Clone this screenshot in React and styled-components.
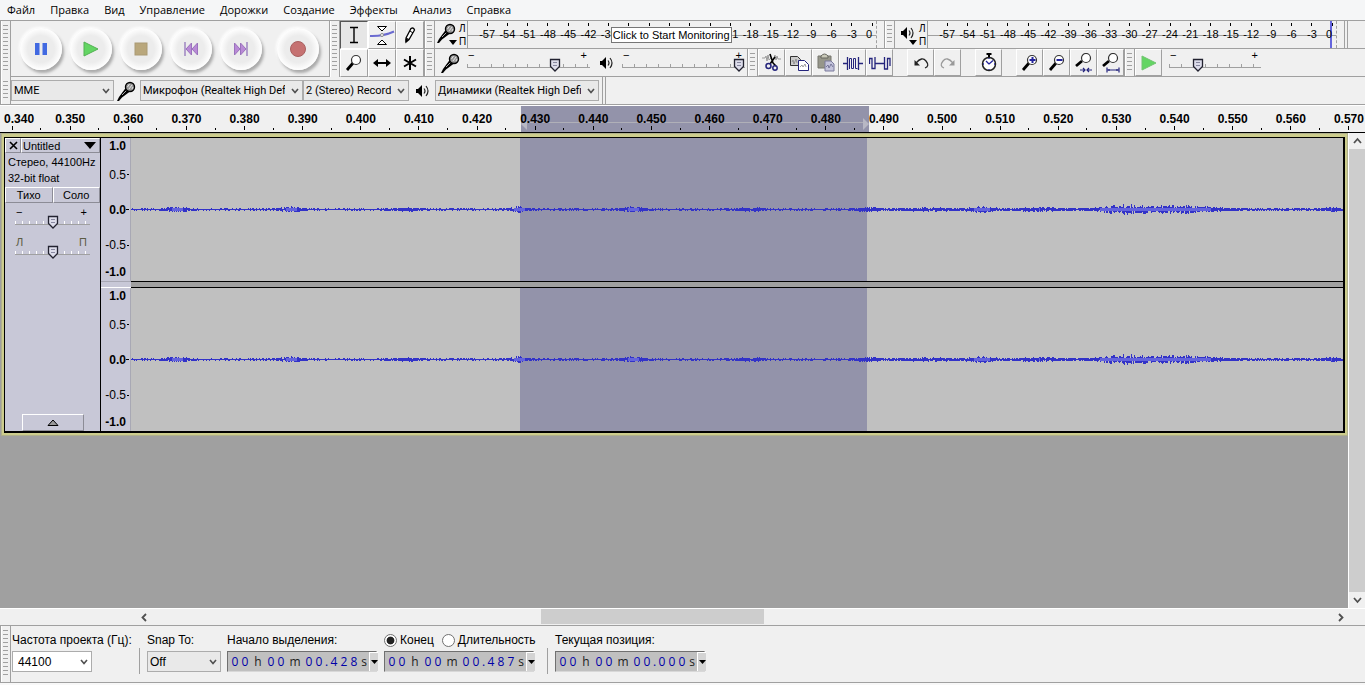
import styled, { createGlobalStyle, css } from "styled-components";

const menuItems = [
  "Файл",
  "Правка",
  "Вид",
  "Управление",
  "Дорожки",
  "Создание",
  "Эффекты",
  "Анализ",
  "Справка",
];

const meterMarks = Array.from({ length: 20 }, (_, i) => i * 3 - 57);
const timeMarks = Array.from({ length: 24 }, (_, i) =>
  (0.34 + i * 0.01).toFixed(3)
);

const App = () => {
  return (
    <Page>
      <GlobalStyle />
      <MenuBar>
        {menuItems.map((item) => (
          <MenuButton key={item}>{item}</MenuButton>
        ))}
      </MenuBar>
      <Dock>
        <TransportBar />
        <ToolsBar />
        <DockColumn>
          <DockRow>
            <Meter name="Record meter" icon={<MicIcon />} hint />
            <Meter name="Playback meter" icon={<SpeakerIcon />} peak />
            <EndMark />
          </DockRow>
          <DockRow>
            <MixerBar />
            <EditBar />
            <PlaySpeedBar />
          </DockRow>
        </DockColumn>
      </Dock>
      <DeviceBar />
      <TimeRuler />
      <Workspace>
        <TrackArea>
          <Track>
            <TrackPanel />
            <Channels>
              <Channel />
              <Channel />
            </Channels>
          </Track>
        </TrackArea>
        <VerticalScroll />
      </Workspace>
      <HorizontalScroll />
      <SelectionBar />
      <StatusBar />
    </Page>
  );
};

export default App;

const TransportBar = () => (
  <Bar>
    <Grip />
    <TransportButtons>
      <RoundButton aria-label="Pause">
        <svg width="14" height="14">
          <path d="M1 1h4.500v12h-4.500zM8.500 1h4.500v12h-4.500z" fill="#4169e1" />
        </svg>
      </RoundButton>
      <RoundButton aria-label="Play">
        <svg width="16" height="16">
          <path d="M1 1L15 8L1 15z" fill="#63d563" stroke="#52b152" />
        </svg>
      </RoundButton>
      <RoundButton aria-label="Stop">
        <svg width="14" height="14">
          <rect x="1" y="1" width="12" height="12" fill="#b9a77c" stroke="#aa9a74" />
        </svg>
      </RoundButton>
      <RoundButton aria-label="Skip to start">
        <SkipIcon />
      </RoundButton>
      <RoundButton aria-label="Skip to end">
        <SkipIcon flip />
      </RoundButton>
      <RoundButton aria-label="Record" $apart>
        <svg width="18" height="18">
          <circle cx="9" cy="9" r="7.500" fill="#c67272" stroke="#a96060" />
        </svg>
      </RoundButton>
    </TransportButtons>
  </Bar>
);

const ToolsBar = () => (
  <Bar>
    <Grip />
    <ToolGrid>
      <ToolButton aria-label="Selection tool" $pressed>
        <svg width="20" height="20">
          <path d="M6 2.500h3.500l.5.500.500-.500H14M10 3v14M6 17.500h3.500l.5-.500.500.500H14" fill="none" stroke="#000" strokeWidth="1.400" />
        </svg>
      </ToolButton>
      <ToolButton aria-label="Envelope tool">
        <svg width="26" height="22">
          <path d="M1 12Q14 12.500 25 7.500" fill="none" stroke="#6b6bd0" strokeWidth="2" />
          <path d="M8.500 2.500h9L13 7z M8.500 20.500h9L13 16z" fill="#fff" stroke="#000" />
          <circle cx="13" cy="11" r="1.500" fill="#fff" stroke="#888" />
        </svg>
      </ToolButton>
      <ToolButton aria-label="Draw tool">
        <svg width="20" height="20">
          <path d="M6 13L11 3.500Q13.500 2 14.500 5L9 14.500L6 17z" fill="#fff" stroke="#000" strokeWidth="1.300" />
          <path d="M10 6l3 2M6 13l3 1.500M6 14v3l2-2z" fill="#000" stroke="#000" />
        </svg>
      </ToolButton>
      <ToolButton aria-label="Zoom tool">
        <MagnifierIcon />
      </ToolButton>
      <ToolButton aria-label="Time shift tool">
        <svg width="20" height="20">
          <path d="M3 10h14" stroke="#000" strokeWidth="2" />
          <path d="M1 10l5-4v8zM19 10l-5-4v8z" />
        </svg>
      </ToolButton>
      <ToolButton aria-label="Multi tool">
        <svg width="20" height="20">
          <path d="M10 3v14M4 6.500l12 7M16 6.500l-12 7" stroke="#000" strokeWidth="2" />
        </svg>
      </ToolButton>
    </ToolGrid>
  </Bar>
);

// the hint lies over the middle marks, which keep only their ticks
const isCovered = (mark) => mark > -38 && mark < -22;

const Meter = ({ name, icon, hint, peak }) => (
  <MeterBar $wide={hint}>
    <Grip />
    <MeterButton aria-label={name}>
      {icon}
      <MeterArrow viewBox="0 0 8 5">
        <path d="M0 0h8L4 5z" />
      </MeterArrow>
    </MeterButton>
    <ChannelNames>
      <span>Л</span>
      <span>П</span>
    </ChannelNames>
    <MeterScale $peak={peak}>
      {meterMarks.map((mark) => (
        <MeterMark key={mark}>{hint && isCovered(mark) ? "" : mark}</MeterMark>
      ))}
      {hint && <Hint role="tooltip">Click to Start Monitoring</Hint>}
    </MeterScale>
  </MeterBar>
);

const MixerBar = () => (
  <MixerGroup>
    <Grip />
    <MixerIcon>
      <MicIcon />
    </MixerIcon>
    <LevelSlider label="Recording volume" value={74} />
    <MixerIcon>
      <SpeakerIcon />
    </MixerIcon>
    <LevelSlider label="Playback volume" value={100} />
  </MixerGroup>
);

const LevelSlider = ({ label, value, width }) => (
  <SliderBox $width={width}>
    <SliderEnds>
      <span>−</span>
      <span>+</span>
    </SliderEnds>
    <Range type="range" aria-label={label} defaultValue={value} />
  </SliderBox>
);

const EditBar = () => (
  <Bar>
    <Grip />
    <ToolButton aria-label="Cut">
      <svg width="20" height="20">
        <path d="M0 5h3l1-2 1 5 1-6 1 5 2-2M12 5l1-3 1 5 1-4 1 3h3" fill="none" stroke="#999" />
        <path d="M8 1l3 9M13 4L8 11M11 10l3 3" fill="none" stroke="#000" strokeWidth="1.600" />
        <circle cx="6.500" cy="13" r="2.500" fill="none" stroke="#24247c" strokeWidth="1.500" />
        <circle cx="13" cy="15" r="2.200" fill="none" stroke="#24247c" strokeWidth="1.500" />
      </svg>
    </ToolButton>
    <ToolButton aria-label="Copy">
      <svg width="20" height="18">
        <path d="M1.500 2.500h7l3 3v6h-10z" fill="#ccc" stroke="#333" />
        <path d="M9.500 6.500h6l4 4v6h-10z" fill="#fff" stroke="#24247c" />
        <path d="M3 8l1-2 1 4 2-5 1 4M11 13l2-2 1 2 2-3 1 3" fill="none" stroke="#888" strokeWidth=".8" />
      </svg>
    </ToolButton>
    <ToolButton aria-label="Paste">
      <svg width="18" height="20">
        <path d="M1 3h13v12H1z" fill="#96968a" stroke="#77776f" />
        <path d="M4 5V3q3.500-4 7 0v2z" fill="#c8c8b8" stroke="#66665e" />
        <path d="M8 8h6l3 3v7H8z" fill="#c4c4dc" stroke="#7a7a9c" />
        <path d="M9 14l2-2 1 3 2-4 2 3" fill="none" stroke="#77779a" />
      </svg>
    </ToolButton>
    <ToolButton aria-label="Trim">
      <svg width="20" height="18">
        <path d="M0 9.500h5M15 9.500h5M4.500 3v13M15.500 3v13" stroke="#24247c" strokeWidth="1.300" />
        <path d="M6.500 15V4.500h2V14.500h2V4.500h2V14.500h2" fill="none" stroke="#24247c" />
      </svg>
    </ToolButton>
    <ToolButton aria-label="Silence">
      <svg width="22" height="18">
        <path d="M.5 10V4.500h2.500V14.500h3V3M6 9.500h9M15.500 3v12h3V4.500h2.500V12" fill="none" stroke="#24247c" strokeWidth="1.300" />
      </svg>
    </ToolButton>
    <ToolGap />
    <ToolButton aria-label="Undo">
      <UndoIcon />
    </ToolButton>
    <ToolButton aria-label="Redo" disabled>
      <UndoIcon flip />
    </ToolButton>
    <ToolGap />
    <ToolButton aria-label="Sync-lock tracks">
      <svg width="18" height="20">
        <path d="M6.500 1h5M9 1v3" stroke="#000" strokeWidth="2" />
        <circle cx="9" cy="11" r="6.500" fill="#fff" stroke="#222" strokeWidth="1.500" />
        <path d="M9 11L6 8M9 11l4-3.500M9 5v1M9 16v1M3 11h1M14 11h1" stroke="#24249c" strokeWidth="1.300" />
      </svg>
    </ToolButton>
    <ToolGap />
    <ToolButton aria-label="Zoom in">
      <MagnifierIcon sign="M9.500 6h6M12.500 3v6" />
    </ToolButton>
    <ToolButton aria-label="Zoom out">
      <MagnifierIcon sign="M9.500 6h6" />
    </ToolButton>
    <ToolButton aria-label="Fit selection">
      <MagnifierIcon under="M6 17h5M13 17h5M9 15l2 2-2 2M15 15l-2 2 2 2" />
    </ToolButton>
    <ToolButton aria-label="Fit project">
      <MagnifierIcon under="M6 17h12M6 14.500v5M18 14.500v5M8 16v2M16 16v2" />
    </ToolButton>
  </Bar>
);

const PlaySpeedBar = () => (
  <Bar>
    <Grip />
    <ToolButton aria-label="Play at speed">
      <svg width="18" height="18">
        <path d="M2 2L16 9L2 16z" fill="#63d563" stroke="#72c472" />
      </svg>
    </ToolButton>
    <SpeedSlot>
      <LevelSlider label="Playback speed" value={29} width={92} />
    </SpeedSlot>
  </Bar>
);

const DeviceBar = () => (
  <DeviceRow>
    <Grip />
    <Combo label="Audio host" value="MME" width={103} />
    <DeviceIcon>
      <MicIcon />
    </DeviceIcon>
    <Combo label="Recording device" value="Микрофон (Realtek High Def" width={163} />
    <Combo label="Recording channels" value="2 (Stereo) Recording" width={106} />
    <DeviceIcon>
      <SpeakerIcon />
    </DeviceIcon>
    <Combo label="Playback device" value="Динамики (Realtek High Definition" width={164} />
    <EndMark />
  </DeviceRow>
);

const Combo = ({ id, label, value, width, white }) => (
  <ComboBox $width={width}>
    <Select id={id} aria-label={id ? undefined : label} $white={white}>
      <option>{value}</option>
    </Select>
    <ComboArrow viewBox="0 0 8 6">
      <path d="M1 1l3 3.500L7 1" />
    </ComboArrow>
  </ComboBox>
);

const TimeRuler = () => (
  <RulerStrip>
    <RulerSelection>
      <svg width="6" height="12">
        <path d="M6 0v12L0 6z" fill="#b8b8c4" />
      </svg>
      <RulerLine />
      <svg width="6" height="12">
        <path d="M0 0v12L6 6z" fill="#b8b8c4" />
      </svg>
    </RulerSelection>
    <RulerMarks>
      {timeMarks.map((mark) => (
        <RulerMark key={mark}>{mark}</RulerMark>
      ))}
    </RulerMarks>
  </RulerStrip>
);

const TrackPanel = () => (
  <Panel>
    <PanelTitle>
      <CloseButton aria-label="Close track">
        <svg width="9" height="9">
          <path d="M1 1l7 7M8 1L1 8" stroke="#000" strokeWidth="1.600" />
        </svg>
      </CloseButton>
      <NameButton>
        Untitled
        <svg width="12" height="7">
          <path d="M0 0h12L6 7z" />
        </svg>
      </NameButton>
    </PanelTitle>
    <PanelInfo>
      Стерео, 44100Hz
      <br />
      32-bit float
    </PanelInfo>
    <PanelButtons>
      <PanelButton>Тихо</PanelButton>
      <PanelButton>Соло</PanelButton>
    </PanelButtons>
    <PanelSlider>
      <SliderEnds>
        <span>−</span>
        <span>+</span>
      </SliderEnds>
      <Range type="range" aria-label="Gain" $light />
    </PanelSlider>
    <PanelSlider>
      <SliderEnds $muted>
        <span>Л</span>
        <span>П</span>
      </SliderEnds>
      <Range type="range" aria-label="Pan" $light />
    </PanelSlider>
    <CollapseButton aria-label="Collapse track">
      <svg width="12" height="7">
        <path d="M1 6.500h10L6 1z" fill="#999" stroke="#000" />
      </svg>
    </CollapseButton>
  </Panel>
);

const Channel = () => (
  <ChannelRow>
    <LevelRuler>
      <LevelMark $bold>1.0</LevelMark>
      <LevelMark $tick>0.5</LevelMark>
      <LevelMark $bold $tick>0.0</LevelMark>
      <LevelMark $tick>-0.5</LevelMark>
      <LevelMark $bold>-1.0</LevelMark>
    </LevelRuler>
    <Wave viewBox="0 0 1212 143" preserveAspectRatio="none">
      <rect y="71" width="1212" height="1" fill="#3232c8" />
      <path d={wavePeak} fill="none" stroke="#3232c8" />
      <path d={waveRms} fill="none" stroke="#6464dc" />
    </Wave>
  </ChannelRow>
);

// centre, half height and spread of every louder spot of the clip
const bursts = [
  [46, 1.8, 12],
  [160, 1.8, 12],
  [275, 1.2, 14],
  [388, 2.2, 9],
  [502, 1.8, 12],
  [620, 1.4, 12],
  [735, 1.4, 10],
  [800, 0.6, 40],
  [851, 1.6, 12],
  [908, 1.2, 20],
  [995, 3, 28],
  [1050, 2.6, 34],
  [1200, 1.2, 10],
];

const level = (x) =>
  bursts.reduce(
    (sum, [at, height, spread]) =>
      sum + height * Math.exp(-(((x - at) / spread) ** 2)),
    x > 740 ? 0.8 : 0.55
  );

const noise = (n) => {
  const v = Math.sin(n * 12.9898) * 43758.5453;
  return v - Math.floor(v);
};

const columns = Array.from({ length: 1212 }, (_, x) => x);
const wavePeak = columns
  .map((x) => {
    const up = Math.round(level(x) * (0.2 + noise(x)));
    const down = Math.round(level(x) * (0.2 + noise(x + 5000)));
    return `M${x + 0.5} ${71 - up}V${72 + down}`;
  })
  .join("");
const waveRms = columns
  .filter((x) => level(x) > 2)
  .map((x) => {
    const half = Math.round(level(x) * 0.35);
    return `M${x + 0.5} ${71 - half}V${72 + half}`;
  })
  .join("");

const VerticalScroll = () => (
  <VScroll>
    <ScrollButton aria-label="Scroll up">
      <ScrollArrow d="M1 6l3.500-4L8 6" />
    </ScrollButton>
    <VThumb />
    <ScrollButton aria-label="Scroll down">
      <ScrollArrow d="M1 2l3.500 4L8 2" />
    </ScrollButton>
  </VScroll>
);

const HorizontalScroll = () => (
  <HScroll>
    <ScrollButton aria-label="Scroll left">
      <ScrollArrow d="M6 1L2.500 4.500L6 8" />
    </ScrollButton>
    <HTrack>
      <HThumb />
    </HTrack>
    <ScrollButton aria-label="Scroll right">
      <ScrollArrow d="M3 1l3.500 3.500L3 8" />
    </ScrollButton>
  </HScroll>
);

const ScrollArrow = ({ d }) => (
  <svg width="9" height="9">
    <path d={d} fill="none" stroke="#505050" strokeWidth="1.800" />
  </svg>
);

const SelectionBar = () => (
  <SelectionRow>
    <Grip />
    <Field $width={128}>
      <label htmlFor="rate">Частота проекта (Гц):</label>
      <Combo id="rate" value="44100" width={80} white />
    </Field>
    <Divider />
    <Field $width={80}>
      <label htmlFor="snap">Snap To:</label>
      <Combo id="snap" value="Off" width={74} />
    </Field>
    <Field $width={157}>
      <span>Начало выделения:</span>
      <TimeControl label="Начало выделения" value="00h00m00.428s" />
    </Field>
    <Field $width={164}>
      <Choices>
        <label>
          <Radio type="radio" name="mode" defaultChecked />
          Конец
        </label>
        <label>
          <Radio type="radio" name="mode" />
          Длительность
        </label>
      </Choices>
      <TimeControl label="Конец" value="00h00m00.487s" />
    </Field>
    <Divider />
    <Field $width={150}>
      <span>Текущая позиция:</span>
      <TimeControl label="Текущая позиция" value="00h00m00.000s" />
    </Field>
  </SelectionRow>
);

const TimeControl = ({ label, value }) => (
  <TimeBox role="group" aria-label={label}>
    {value.split("").map((char, i) => (
      <TimeChar key={i} $char={char}>
        {char}
      </TimeChar>
    ))}
    <TimeButton aria-label={`${label}: format`}>
      <svg width="7" height="5">
        <path d="M0 0h7L3.500 4z" />
      </svg>
    </TimeButton>
  </TimeBox>
);

const MicIcon = () => (
  <svg width="20" height="20">
    <path d="M0 20L2 16L9 6.500L13 10.500L5 16.500L2 20z" fill="#000" />
    <path d="M5 14l5-5" stroke="#aaa" />
    <circle cx="13" cy="6" r="4.500" fill="#999" stroke="#000" strokeWidth="1.400" />
    <path d="M10.500 6l2-3M12 8l3-4M15 8l1-2" stroke="#e4e4e4" />
  </svg>
);

const SpeakerIcon = () => (
  <svg width="14" height="14">
    <path d="M1 5h2l4-4v12L3 9H1z" />
    <path d="M9 4.500q2 2.500 0 5M11 2q4 5 0 10" fill="none" stroke="#222" strokeWidth="1.200" />
  </svg>
);

const SkipIcon = ({ flip }) => (
  <svg width="16" height="16">
    <g transform={flip ? "matrix(-1 0 0 1 16 0)" : undefined}>
      <path d="M2 1v14" stroke="#8b6cb8" strokeWidth="1.200" />
      <path d="M8.500 2v12L3 8zM14.500 2v12L9 8z" fill="#b98ad6" stroke="#9a72bd" />
    </g>
  </svg>
);

const MagnifierIcon = ({ sign, under }) => (
  <svg width="20" height="20">
    <path d={under ? "M2 13L8 8" : "M3 17L9 10"} stroke="#000" strokeWidth="2.800" />
    <circle cx="12" cy={under ? 5 : 7} r="4.500" fill="#fff" stroke="#333" strokeWidth="1.200" />
    {sign && <path d={sign} stroke="#24249c" strokeWidth="2" transform="translate(0 1)" />}
    {under && <path d={under} fill="none" stroke="#24247c" strokeWidth="1.200" />}
  </svg>
);

const UndoIcon = ({ flip }) => (
  <svg width="16" height="14">
    <g transform={flip ? "matrix(-1 0 0 1 16 0)" : undefined}>
      <path
        d="M3 7Q9 0 13 5T12 12"
        fill="none"
        stroke={flip ? "#999" : "#222"}
        strokeWidth="1.300"
      />
      <path d="M1.500 4v5.500h5.500z" fill={flip ? "#999" : "#222"} />
    </g>
  </svg>
);

const GlobalStyle = createGlobalStyle`
  * {
    box-sizing: border-box;
  }

  body {
    margin: 0;
    background: #f0f0f0;
    color: #000;
    font-family: "Liberation Sans", sans-serif;
    font-size: 12px;
  }

  button {
    margin: 0;
    padding: 0;
    border: 0;
    background: none;
    color: inherit;
    font: inherit;
  }

  svg {
    display: block;
    flex: none;
  }
`;

const Page = styled.div`
  display: flex;
  flex-direction: column;
  min-height: 100vh;
  overflow: hidden;
`;

const MenuBar = styled.nav`
  display: flex;
  height: 20px;
  padding-left: 7px;
  gap: 15px;
  background: #f5f6f7;
`;

const MenuButton = styled.button`
  font-family: "Open Sans", sans-serif;
  font-size: 11px;
  line-height: 20px;
`;

const Dock = styled.div`
  display: flex;
  border-top: 1px solid #a0a0a0;
`;

const DockColumn = styled.div`
  flex: 1;
  min-width: 0;
`;

const DockRow = styled.div`
  display: flex;
  height: 28px;
  border-bottom: 1px solid #a0a0a0;
`;

const Bar = styled.div`
  display: flex;
`;

const Grip = styled.div`
  flex: none;
  width: 11px;
  border: solid #a0a0a0;
  border-width: 0 1px;
  box-shadow: inset 1px 0 #fff;
  background: repeating-linear-gradient(#a0a0a0 0 1px, transparent 1px 4px)
    center / 5px calc(100% - 8px) no-repeat;
`;

const TransportButtons = styled.div`
  display: flex;
  align-items: center;
  gap: 8px;
  padding: 0 10px 0 9px;
  border-bottom: 1px solid #a0a0a0;
`;

const RoundButton = styled.button`
  display: flex;
  align-items: center;
  justify-content: center;
  width: 42px;
  height: 42px;
  margin-left: ${({ $apart }) => ($apart ? "7px" : "0")};
  border-radius: 50%;
  background: radial-gradient(circle, #ececec 45%, #fdfdfd 68%);
  box-shadow: 2px 3px 3px #aaa, -1px -1px 3px #fff;
`;

const ToolGrid = styled.div`
  display: grid;
  grid-template-columns: repeat(3, 28px);
  grid-template-rows: 28px 28px;
`;

const ToolButton = styled.button`
  display: flex;
  flex: none;
  align-items: center;
  justify-content: center;
  min-width: 27px;
  border: solid;
  border-width: 1px;
  border-color: #fff #a0a0a0 #a0a0a0 #fff;

  ${({ $pressed }) =>
    $pressed &&
    css`
      border-color: #555 #fff #fff #555;
      background: #e6e6e6;
    `}
`;

const ToolGap = styled.div`
  width: 14px;
`;

const MeterBar = styled.div`
  display: flex;
  flex: 0 1 ${({ $wide }) => ($wide ? "460px" : "457px")};
  min-width: 0;
`;

const MeterButton = styled.button`
  display: flex;
  flex: none;
  align-items: center;
  justify-content: center;
  position: relative;
  width: 24px;
  padding-bottom: 3px;
`;

const MeterArrow = styled.svg`
  position: absolute;
  right: 2px;
  bottom: 3px;
  width: 8px;
  height: 5px;
`;

const ChannelNames = styled.div`
  display: flex;
  flex-direction: column;
  flex: none;
  width: 8px;
  padding-top: 1px;
  font-size: 10px;
  line-height: 13px;
`;

const MeterScale = styled.div`
  display: flex;
  flex: 1;
  position: relative;
  min-width: 0;
  margin-right: 7px;
  padding-left: 9px;
  border-left: 1px solid #a0a0a0;
  border-right: 1px dashed #a0a0a0;
  background: linear-gradient(#a0a0a0, #a0a0a0) 0 14px / 100% 1px no-repeat;

  ${({ $peak }) =>
    $peak &&
    css`
      margin-right: 4px;
      background: linear-gradient(#6464dc, #6464dc) calc(100% - 4px) 0 / 2px 100%
          no-repeat,
        linear-gradient(#a0a0a0, #a0a0a0) 0 14px / 100% 1px no-repeat;
    `}
`;

const MeterMark = styled.span`
  flex: 1;
  min-width: 0;
  background: linear-gradient(#000, #000) center top 2px / 1px 3px no-repeat;
  font-size: 11px;
  line-height: 27px;
  text-align: center;

  &:last-of-type {
    flex: none;
    width: 14px;
    background-position: right 3px top 2px;
  }
`;

const Hint = styled.div`
  position: absolute;
  top: 6px;
  left: 35%;
  padding: 0 1px;
  border: 1px solid #767676;
  background: #fff;
  font-size: 11px;
  line-height: 14px;
  white-space: nowrap;
`;

const EndMark = styled.div`
  width: 4px;
  margin-left: 3px;
  border: solid #a0a0a0;
  border-width: 0 1px;
`;

const MixerGroup = styled.div`
  display: flex;
  flex: none;
  width: 323px;
`;

const MixerIcon = styled.div`
  display: flex;
  align-items: center;
  justify-content: center;
  width: 32px;
`;

const SliderBox = styled.div`
  width: ${({ $width }) => $width || 123}px;
  padding-top: 1px;
`;

const SliderEnds = styled.div`
  display: flex;
  justify-content: space-between;
  height: 8px;
  padding: 0 3px 0 1px;
  color: ${({ $muted }) => ($muted ? "#5c5c44" : "#000")};
  font-size: 11px;
  line-height: 11px;
`;

const thumb = `url("data:image/svg+xml,%3Csvg xmlns='http://www.w3.org/2000/svg' width='12' height='14'%3E%3Cpath d='M1.500 1.500h9v7L6 13L1.500 8.500z' fill='%23dcdcea' stroke='%23222230' stroke-width='1.300'/%3E%3Cpath d='M4 4.500h4M4 7.500h4' stroke='%238888a0'/%3E%3C/svg%3E")`;

const Range = styled.input`
  display: block;
  appearance: none;
  width: 100%;
  height: 14px;
  margin: 0;
  background: linear-gradient(#a0a0a0, #a0a0a0) 0 9px / 100% 1px no-repeat,
    repeating-linear-gradient(
        90deg,
        ${({ $light }) => ($light ? "#fff" : "#a0a0a0")} 0 1px,
        transparent 1px ${({ $light }) => ($light ? "7px" : "12px")}
      )
      0 6px / 100% 3px no-repeat;

  &::-webkit-slider-thumb {
    appearance: none;
    width: 12px;
    height: 14px;
    background: ${thumb};
  }
`;

const SpeedSlot = styled.div`
  padding-left: 7px;
`;

const DeviceRow = styled.div`
  display: flex;
  align-items: stretch;
  height: 28px;
  border-bottom: 1px solid #a0a0a0;
`;

const DeviceIcon = styled.div`
  display: flex;
  align-items: center;
  justify-content: center;
  width: 26px;
`;

const ComboBox = styled.div`
  position: relative;
  align-self: center;
  flex: none;
  width: ${({ $width }) => $width}px;
`;

const Select = styled.select`
  appearance: none;
  display: block;
  width: 100%;
  height: 21px;
  padding: 0 17px 0 ${({ $white }) => ($white ? "5px" : "2px")};
  border: 1px solid #acacac;
  border-radius: 0;
  background: ${({ $white }) => ($white ? "#fff" : "#e9e9e9")};
  color: #000;
  font-family: Roboto, sans-serif;
  font-size: 11px;
`;

const ComboArrow = styled.svg`
  position: absolute;
  top: 8px;
  right: 4px;
  width: 8px;
  height: 6px;
  fill: none;
  stroke: #505050;
  stroke-width: 1.6;
  pointer-events: none;
`;

const RulerStrip = styled.div`
  position: relative;
  height: 28px;
  overflow: hidden;
  border-top: 1px solid #fff;
  border-bottom: 1px solid #000;
`;

const RulerSelection = styled.div`
  display: flex;
  align-items: flex-end;
  position: absolute;
  top: 0;
  bottom: 0;
  left: 38.2%;
  width: 25.5%;
  padding-bottom: 2px;
  background: #9393aa;
`;

const RulerLine = styled.div`
  flex: 1;
  height: 8px;
  border-top: 1px solid #b0b0b8;
`;

const RulerMarks = styled.div`
  display: flex;
  position: relative;
  height: 100%;
  margin: 0 -13px 0 -17px;
`;

const RulerMark = styled.span`
  flex: 1;
  min-width: 0;
  padding-top: 6px;
  background: linear-gradient(#000, #000) center bottom 2px / 1px 4px no-repeat,
    linear-gradient(#000, #000) right bottom 2px / 1px 2px no-repeat;
  font-weight: bold;
  line-height: 14px;
  text-align: center;

  &:first-child {
    text-indent: 14px;
  }
`;

const Workspace = styled.div`
  display: flex;
  flex: 1;
  min-height: 475px;
`;

const TrackArea = styled.div`
  flex: 1;
  min-width: 0;
  padding: 1px 1px 0 2px;
  background: #a0a0a0;
`;

const Track = styled.div`
  display: flex;
  border: 2px solid #cccc8c;
  border-top-width: 3px;
  outline: 1px solid #b0b08c;
  background: #c8c8d7;
`;

const Panel = styled.div`
  display: flex;
  flex-direction: column;
  flex: none;
  width: 97px;
  border: 1px solid #000;
  border-bottom-width: 2px;
  font-size: 11px;
`;

const PanelTitle = styled.div`
  display: flex;
  height: 15px;
`;

const bevel = css`
  border: 1px solid;
  border-color: #fff #8c8c96 #8c8c96 #fff;
`;

const CloseButton = styled.button`
  ${bevel}
  display: flex;
  align-items: center;
  justify-content: center;
  width: 16px;
`;

const NameButton = styled.button`
  ${bevel}
  display: flex;
  flex: 1;
  align-items: center;
  justify-content: space-between;
  padding: 0 3px 0 1px;
`;

const PanelInfo = styled.div`
  padding: 1px 0 1px 3px;
  line-height: 16px;
  white-space: nowrap;
`;

const PanelButtons = styled.div`
  display: flex;
  height: 16px;
  margin-bottom: 4px;
`;

const PanelButton = styled.button`
  ${bevel}
  flex: 1;
`;

const PanelSlider = styled.div`
  height: 30px;
  margin: 0 10px;
`;

const CollapseButton = styled.button`
  ${bevel}
  display: flex;
  align-items: center;
  justify-content: center;
  align-self: center;
  width: 62px;
  height: 17px;
  margin-top: auto;
`;

const Channels = styled.div`
  flex: 1;
  min-width: 0;
  border: solid #000;
  border-width: 1px 2px 2px 0;
`;

const LevelRuler = styled.div`
  display: grid;
  grid-template-rows: 14px 15fr 14px 21fr 14px 22fr 14px 13fr 14px 2fr;
  width: 30px;
  padding-top: 1px;
  border-right: 1px solid #a8a8b4;
`;

const LevelMark = styled.div`
  display: flex;
  align-items: center;
  justify-content: flex-end;
  padding-right: 4px;
  font-weight: ${({ $bold }) => ($bold ? "bold" : "normal")};
  line-height: 14px;

  ${({ $tick }) =>
    $tick &&
    css`
      padding-right: 1px;

      &::after {
        content: "";
        width: ${({ $bold }) => ($bold ? "3px" : "2px")};
        height: 1px;
        margin-left: ${({ $bold }) => ($bold ? "0" : "1px")};
        background: #000;
      }
    `}

  &:nth-child(2) {
    grid-row: 3;
  }

  &:nth-child(3) {
    grid-row: 5;
  }

  &:nth-child(4) {
    grid-row: 7;
  }

  &:nth-child(5) {
    grid-row: 9;
  }
`;

const Wave = styled.svg`
  flex: 1;
  min-width: 0;
  height: 143px;
  background: linear-gradient(
    90deg,
    #c0c0c0 32.1%,
    #9393aa 32.1% 60.7%,
    #c0c0c0 60.7%
  );
`;

const ChannelRow = styled.div`
  display: flex;
  height: 143px;

  & + & {
    margin-top: 7px;
  }

  & + & ${Wave} {
    box-shadow: 0 -1px #000, 0 -6px #a0a0a0, 0 -7px #000;
  }

  & + & ${LevelRuler} {
    box-shadow: 0 -1px #fff, 0 -6px #c8c8d7, 0 -7px #a8a8b4;
  }
`;

const VScroll = styled.div`
  display: flex;
  flex-direction: column;
  width: 17px;
  border-left: 1px solid #fff;
  background: #f0f0f0;
`;

const ScrollButton = styled.button`
  display: flex;
  flex: none;
  align-items: center;
  justify-content: center;
  width: 16px;
  height: 16px;
`;

const VThumb = styled.div`
  flex: 1;
  background: #cdcdcd;
`;

const HScroll = styled.div`
  display: flex;
  height: 18px;
  padding: 0 17px 1px 136px;
  border-top: 1px solid #fff;
  border-bottom: 1px solid #a0a0a0;
`;

const HTrack = styled.div`
  display: grid;
  flex: 1;
  grid-template-columns: 389fr 224fr 568fr;
`;

const HThumb = styled.div`
  grid-column: 2;
  background: #cdcdcd;
`;

const SelectionRow = styled.div`
  display: flex;
  height: 57px;
  border-bottom: 1px solid #a0a0a0;
`;

const Field = styled.div`
  display: flex;
  flex-direction: column;
  align-items: flex-start;
  justify-content: space-between;
  width: ${({ $width }) => $width}px;
  padding: 6px 0 10px 1px;
  line-height: 16px;
  white-space: nowrap;

  ${ComboBox} {
    align-self: flex-start;
  }

  ${Select} {
    font-family: "Liberation Sans", sans-serif;
    font-size: 12px;
  }
`;

const Divider = styled.div`
  align-self: flex-end;
  height: 26px;
  margin: 0 6px 8px 0;
  border-left: 1px solid #a0a0a0;
`;

const Choices = styled.div`
  display: flex;
  gap: 8px;

  label {
    display: flex;
    align-items: center;
    gap: 3px;
  }
`;

const Radio = styled.input`
  appearance: none;
  width: 13px;
  height: 13px;
  margin: 0;
  border: 1px solid #707070;
  border-radius: 50%;
  background: #fff;

  &:checked {
    background: radial-gradient(circle, #222 45%, #fff 55%);
  }
`;

const TimeBox = styled.div`
  display: flex;
  align-items: center;
  width: 150px;
  height: 21px;
  padding-left: 2px;
  border: 1px solid;
  border-color: #707070 #d8d8d8 #d8d8d8 #707070;
  background: #c0c0c0;
`;

const charWidths = { h: 16, m: 18, ".": 5, s: 10 };

const TimeChar = styled.span`
  flex: none;
  width: ${({ $char }) => charWidths[$char] || 10}px;
  color: ${({ $char }) => (/[hms]/.test($char) ? "#222" : "#0000a8")};
  font-family: "Open Sans", sans-serif;
  font-size: 12px;
  text-align: center;
`;

const TimeButton = styled.button`
  display: flex;
  flex: none;
  align-items: center;
  justify-content: center;
  width: 9px;
  height: 19px;
  margin-left: auto;
  border: solid #fff;
  border-width: 1px 0 0 1px;
  background: #d4d4d4;
`;

const StatusBar = styled.footer`
  height: 2px;
  background: #f8f8f8;
`;
